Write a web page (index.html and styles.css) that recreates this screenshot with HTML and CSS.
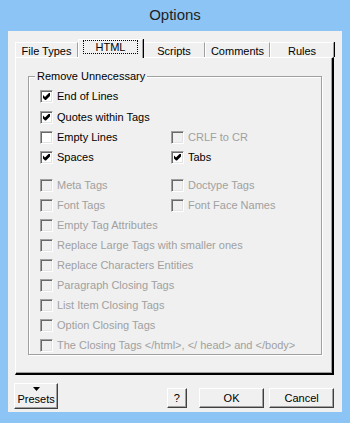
FILE: index.html
```html
<!DOCTYPE html>
<html lang="en">
  <head>
    <meta charset="UTF-8" />
    <title>Options</title>
    <link rel="stylesheet" href="styles.css">
  </head>
  <body>
    <div class="window">
      <div class="title-bar">Options</div>

      <div class="client">
        <div class="tabs">
          <div class="tabs-row">
            <div class="tab tab-filetypes">File Types</div>
            <div class="tab tab-html selected"><span class="focus">HTML</span></div>
            <div class="tab tab-scripts">Scripts</div>
            <div class="tab tab-comments">Comments</div>
            <div class="tab tab-rules">Rules</div>
          </div>

          <div class="tab-page">
            <div class="group">
              <div class="group-title">Remove Unnecessary</div>

              <div class="options first">
                <label class="option"><span class="box checked"></span>End of Lines</label>
                <span></span>
                <label class="option"><span class="box checked"></span>Quotes within Tags</label>
                <span></span>
                <label class="option"><span class="box"></span>Empty Lines</label>
                <label class="option disabled"><span class="box"></span>CRLF to CR</label>
                <label class="option"><span class="box checked"></span>Spaces</label>
                <label class="option"><span class="box checked"></span>Tabs</label>
              </div>

              <div class="options second">
                <label class="option disabled"><span class="box"></span>Meta Tags</label>
                <label class="option disabled"><span class="box"></span>Doctype Tags</label>
                <label class="option disabled"><span class="box"></span>Font Tags</label>
                <label class="option disabled"><span class="box"></span>Font Face Names</label>
                <label class="option disabled wide"><span class="box"></span>Empty Tag Attributes</label>
                <label class="option disabled wide"><span class="box"></span>Replace Large Tags with smaller ones</label>
                <label class="option disabled wide"><span class="box"></span>Replace Characters Entities</label>
                <label class="option disabled wide"><span class="box"></span>Paragraph Closing Tags</label>
                <label class="option disabled wide"><span class="box"></span>List Item Closing Tags</label>
                <label class="option disabled wide"><span class="box"></span>Option Closing Tags</label>
                <label class="option disabled wide"><span class="box"></span>The Closing Tags &lt;/html&gt;, &lt;/ head&gt; and &lt;/body&gt;</label>
              </div>
            </div>
          </div>
        </div>

        <div class="button-row">
          <button class="btn presets">
            <svg class="arrow" width="7" height="4" viewBox="0 0 7 4"><polygon points="0,0 7,0 3.5,4" fill="#000"/></svg>
            <span>Presets</span>
          </button>
          <button class="btn help">?</button>
          <button class="btn ok">OK</button>
          <button class="btn cancel">Cancel</button>
        </div>
      </div>
    </div>
  </body>
</html>
```

FILE: styles.css
```css
* {
  margin: 0;
  padding: 0;
  box-sizing: border-box;
}

body {
  font-family: "Liberation Sans", Arial, sans-serif;
  font-size: 11px;
  color: #000;
  background: #8cc4f6;
}

.window {
  width: 350px;
  height: 423px;
  padding: 0 8px 11px 8px;
  background: #8cc4f6;
}

.title-bar {
  height: 31px;
  padding-top: 6px;
  font-size: 15px;
  line-height: 18px;
  text-align: center;
  color: #222;
}

.client {
  width: 334px;
  height: 381px;
  padding: 8px 8px 0 7px;
  background: #f0f0f0;
}

/* tab control */

.tabs {
  width: 319px;
}

.tabs-row {
  display: flex;
  align-items: flex-end;
  height: 18px;
}

.tab {
  height: 15px;
  padding-top: 2px;
  line-height: 13px;
  text-align: center;
  border-top: 1px solid #fff;
  border-left: 1px solid #fff;
  border-right: 1px solid #a0a0a0;
  box-shadow: 1px 0 0 #696969;
  overflow: hidden;
}

.tab-filetypes { width: 63px; }
.tab-html { width: 65px; }
.tab-scripts { width: 62px; }
.tab-comments { width: 65px; }
.tab-rules {
  width: 64px;
  border-right: 1px solid #a0a0a0;
  box-shadow: 1px 0 0 #000;
}

.tab.selected {
  height: 19px;
  margin-bottom: -1px;
  padding-top: 1px;
  position: relative;
  z-index: 1;
  overflow: visible;
  background: #f0f0f0;
  border-right-color: #a0a0a0;
  box-shadow: 1px 0 0 #000;
}

.focus {
  display: inline-block;
  padding: 0 12px;
  line-height: 12px;
  outline: 1px dotted #000;
}

.tab-page {
  height: 318px;
  border-top: 1px solid #fff;
  border-left: 1px solid #fff;
  border-right: 2px solid #000;
  border-bottom: 2px solid #000;
  box-shadow: inset -1px -1px 0 #a0a0a0;
  padding: 18px 0 0 12px;
}

/* group box */

.group {
  width: 294px;
  height: 279px;
  border: 1px solid #a0a0a0;
  box-shadow: inset 1px 1px 0 #fff, 1px 1px 0 #fff;
  padding-left: 11px;
}

.group-title {
  display: table;
  margin: -7px 0 3px -5px;
  padding: 0 2px;
  line-height: 13px;
  background: #f0f0f0;
}

.options {
  display: grid;
  grid-template-columns: 131px 1fr;
  grid-auto-rows: 20px;
}

.options.first {
  grid-template-rows: 21px;
}

.options.second {
  margin-top: 8px;
}

.option {
  display: flex;
  align-items: center;
  gap: 4px;
  white-space: nowrap;
  line-height: 13px;
}

.option.wide {
  grid-column: 1 / 3;
}

.option.disabled {
  color: #a0a0a0;
}

.box {
  position: relative;
  flex: none;
  width: 13px;
  height: 13px;
  background: #fff;
  border: 1px solid;
  border-color: #a0a0a0 #fff #fff #a0a0a0;
  box-shadow: inset 1px 1px 0 #696969, inset -1px -1px 0 #e3e3e3;
}

.option.disabled .box {
  background: #f0f0f0;
}

.box.checked::after {
  content: "";
  position: absolute;
  left: 2px;
  top: 2px;
  width: 7px;
  height: 7px;
  background: #000;
  clip-path: polygon(0 28.6%, 28.6% 57.1%, 85.7% 0, 100% 0, 100% 42.9%, 42.9% 100%, 28.6% 100%, 0 71.4%);
}

/* buttons */

.button-row {
  display: flex;
  align-items: flex-end;
  margin-top: 8px;
  margin-left: -1px;
}

.btn {
  font-family: inherit;
  font-size: 11px;
  color: #000;
  background: #f0f0f0;
  border: 1px solid;
  border-color: #fff #404040 #404040 #fff;
  box-shadow: inset -1px -1px 0 #a0a0a0;
  height: 20px;
  margin-bottom: 1px;
  line-height: 13px;
}

.presets {
  width: 45px;
  height: 26px;
  margin-bottom: 0;
  display: flex;
  flex-direction: column;
  align-items: center;
  padding-top: 3px;
  gap: 2px;
}

.arrow {
  display: block;
}

.help {
  width: 20px;
  margin-left: 109px;
}

.ok {
  width: 67px;
  margin-left: 12px;
}

.cancel {
  width: 66px;
  margin-left: 5px;
}
```
